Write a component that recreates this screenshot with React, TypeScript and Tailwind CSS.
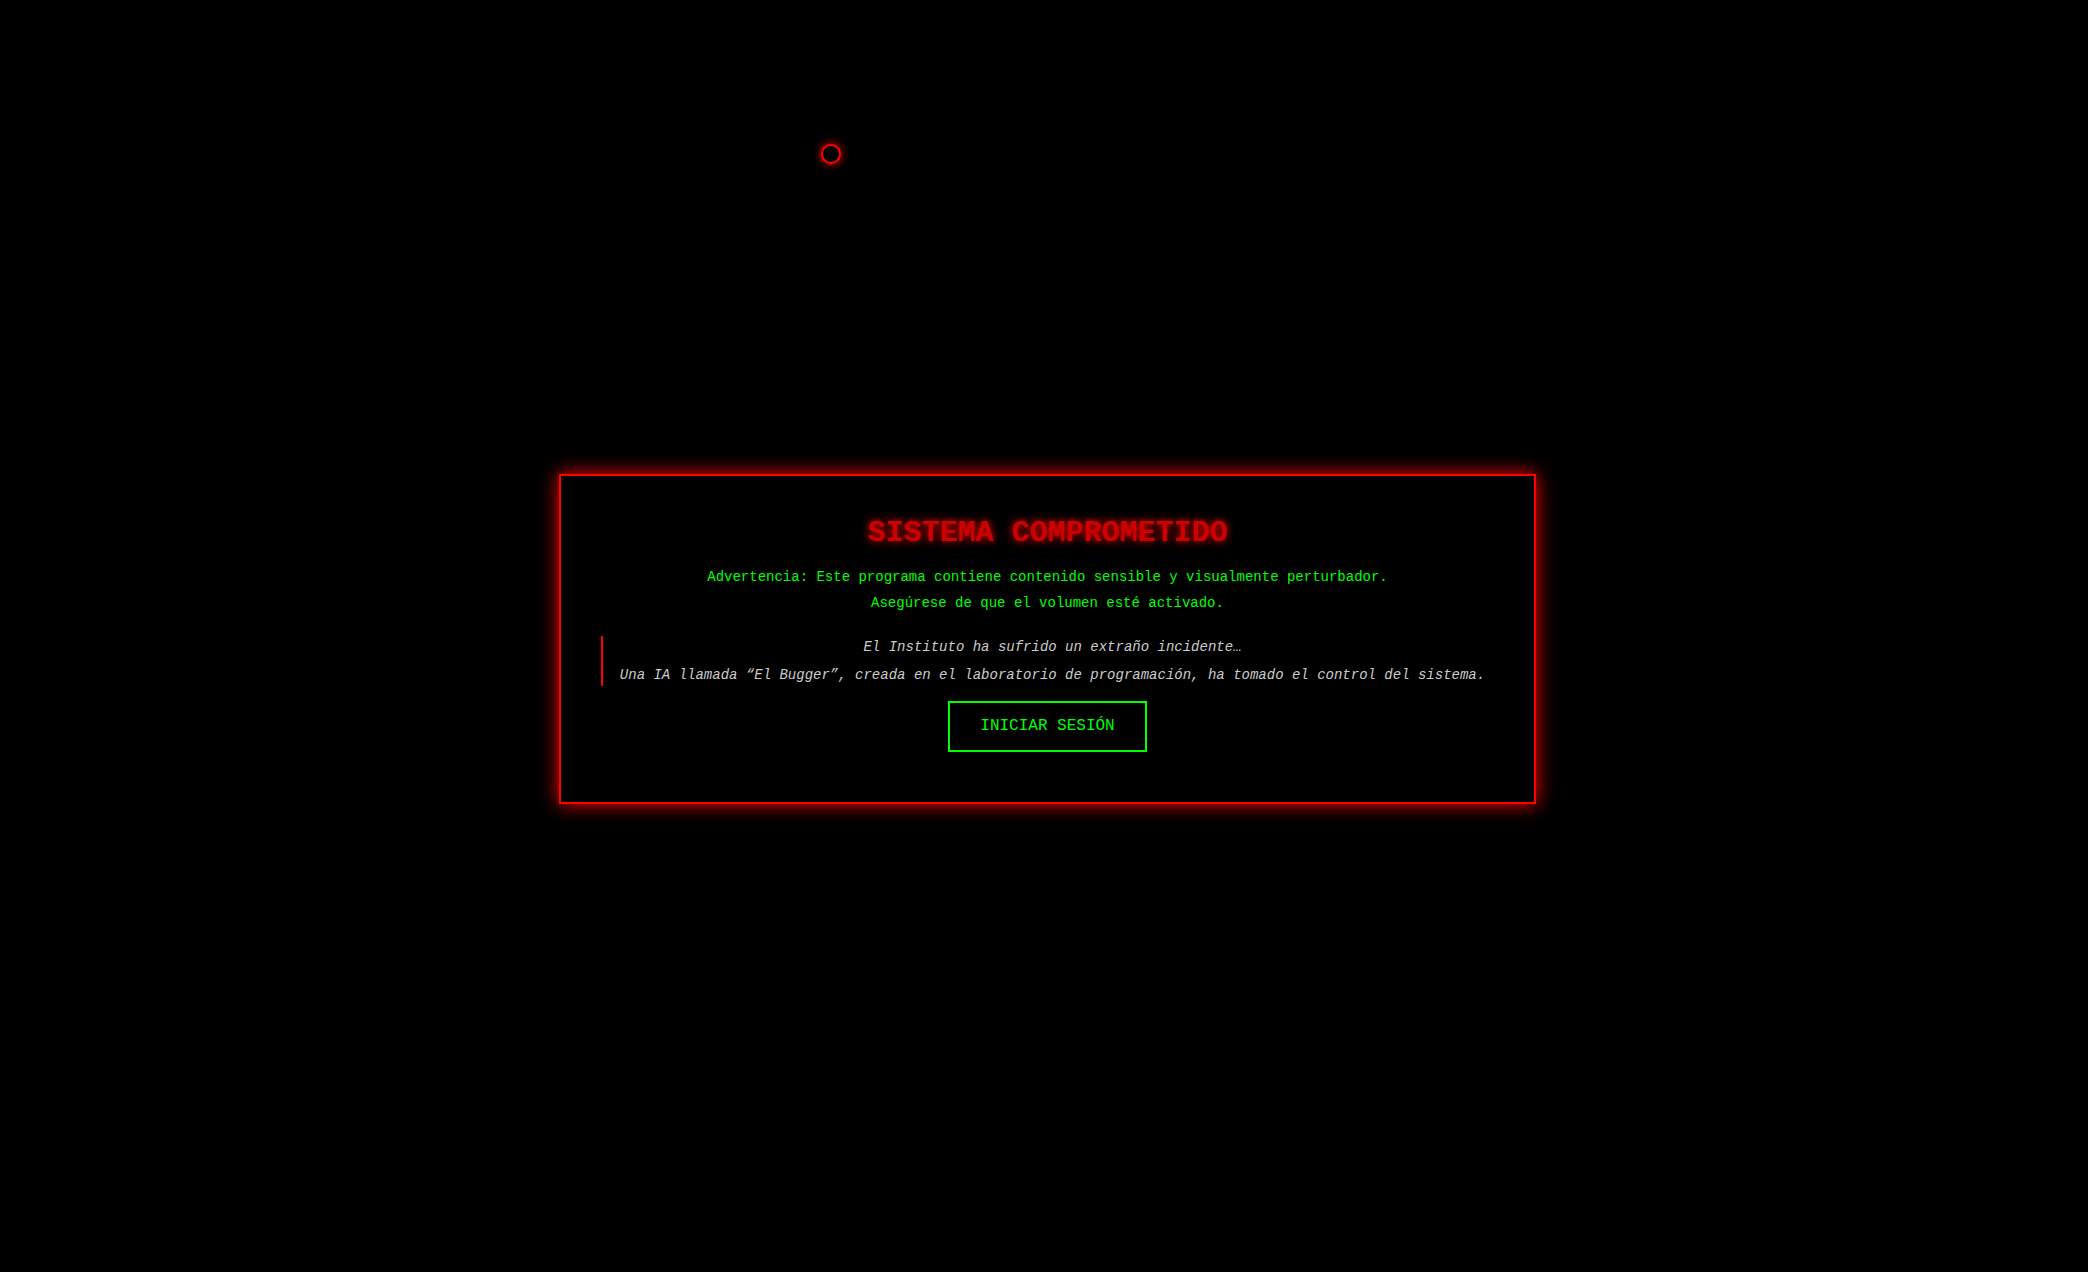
import React from 'react'

const mono = 'font-["Liberation_Mono","Courier_New",monospace]'

export default function App() {
  return (
    <div className={`relative w-full h-[1272px] bg-black overflow-hidden ${mono}`}>
      {/* cursor ring */}
      <div className="absolute left-[821px] top-[144px] w-[20px] h-[20px] rounded-full border-2 border-[#ff0000] bg-black shadow-[0_0_8px_#ff0000]" />

      <div className="flex h-full items-center justify-center pl-[7px] pt-[6px]">
        <div className="w-[977px] border-2 border-[#ff0000] bg-black p-[40px] shadow-[0_0_18px_#ff0000] text-center">
          <h1 className="text-[30px] leading-[34px] font-bold text-[#cc0000] [text-shadow:0_0_8px_#ff0000]">
            SISTEMA COMPROMETIDO
          </h1>

          <div className="mt-[14px] text-[14px] leading-[26px] text-[#00ff00]">
            <p>Advertencia: Este programa contiene contenido sensible y visualmente perturbador.</p>
            <p>Asegúrese de que el volumen esté activado.</p>
          </div>

          <blockquote className="mt-[20px] flex flex-col gap-[6px] border-l-2 border-[#ff0000] pl-[8px] text-[14px] leading-[22px] italic text-[#cccccc]">
            <p>El Instituto ha sufrido un extraño incidente…</p>
            <p>Una IA llamada “El Bugger”, creada en el laboratorio de programación, ha tomado el control del sistema.</p>
          </blockquote>

          <button className="mt-[15px] mb-[10px] border-2 border-[#00ff00] bg-black px-[30px] py-[15px] text-[16px] leading-[17px] text-[#00ff00] cursor-pointer">
            INICIAR SESIÓN
          </button>
        </div>
      </div>
    </div>
  )
}
